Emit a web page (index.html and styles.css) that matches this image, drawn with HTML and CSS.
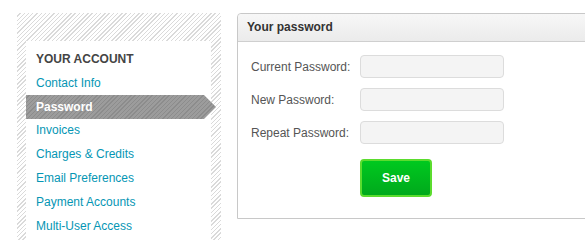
FILE: index.html
```html
<!DOCTYPE html>
<html>
<head>
    <title>Your password</title>
    <link rel="stylesheet" href="styles.css">
</head>
<body>
    <div class="page">
        <div class="sidebar">
            <div class="nav-box">
                <h3>YOUR ACCOUNT</h3>
                <ul class="nav">
                    <li><a href="#">Contact Info</a></li>
                    <li class="active"><a href="#">Password</a></li>
                    <li><a href="#">Invoices</a></li>
                    <li><a href="#">Charges &amp; Credits</a></li>
                    <li><a href="#">Email Preferences</a></li>
                    <li><a href="#">Payment Accounts</a></li>
                    <li><a href="#">Multi-User Access</a></li>
                </ul>
            </div>
        </div>

        <div class="panel">
            <div class="panel-header">Your password</div>
            <form class="panel-body">
                <div class="row">
                    <label>Current Password:</label>
                    <input type="password">
                </div>
                <div class="row">
                    <label>New Password:</label>
                    <input type="password">
                </div>
                <div class="row">
                    <label>Repeat Password:</label>
                    <input type="password">
                </div>
                <div class="row actions">
                    <button type="button">Save</button>
                </div>
            </form>
        </div>
    </div>
</body>
</html>
```

FILE: styles.css
```css
body {
    margin: 0;
    font-family: "Liberation Sans", Arial, sans-serif;
    font-size: 12px;
    background-color: #fff;
    overflow: hidden;
}
.page {
    display: flex;
    align-items: flex-start;
    gap: 16px;
    padding: 13px 0 0 17px;
    height: 240px;
    box-sizing: border-box;
}
.sidebar {
    width: 204px;
    flex-shrink: 0;
    align-self: stretch;
    padding: 28px 10px 0 9px;
    box-sizing: border-box;
    background: repeating-linear-gradient(135deg, #fff 0, #fff 2px, #dadada 2px, #dadada 3px);
}
.nav-box {
    background-color: #fff;
    height: 100%;
    padding-top: 6px;
}
.nav-box h3 {
    margin: 0;
    padding-left: 10px;
    line-height: 24px;
    font-size: 12px;
    color: #444;
}
.nav {
    list-style: none;
    margin: 0;
    padding: 0;
}
.nav li {
    line-height: 24px;
    height: 24px;
}
.nav a {
    display: block;
    padding-left: 10px;
    color: #0596b4;
    text-decoration: none;
}
.nav li.active {
    width: 190px;
    margin-bottom: -1px;
    background: repeating-linear-gradient(135deg, #9c9c9c 0, #9c9c9c 2px, #8c8c8c 2px, #8c8c8c 3px);
    clip-path: polygon(0 0, 178px 0, 100% 50%, 178px 100%, 0 100%);
}
.nav li.active a {
    color: #fff;
    font-weight: bold;
}
.panel {
    flex: 1;
    margin-right: -10px;
    border: 1px solid #c8c8c8;
    border-radius: 4px 0 0 0;
}
.panel-header {
    height: 27px;
    line-height: 27px;
    padding-left: 9px;
    font-weight: bold;
    color: #333;
    background: linear-gradient(#f7f7f7, #ebebeb);
    border-bottom: 1px solid #cfcfcf;
    border-radius: 4px 0 0 0;
}
.panel-body {
    display: flex;
    flex-direction: column;
    gap: 10px;
    padding: 13px 0 21px 13px;
    margin: 0;
}
.row {
    display: flex;
    align-items: center;
}
.row label {
    width: 109px;
    color: #555;
}
.row input {
    width: 144px;
    height: 23px;
    box-sizing: border-box;
    border: 1px solid #dcdcdc;
    border-radius: 4px;
    background-color: #f4f4f4;
    padding: 0;
}
.actions {
    padding-left: 109px;
    margin-top: 5px;
}
button {
    width: 72px;
    height: 38px;
    border: 2px solid #5bdc2e;
    border-radius: 4px;
    background: linear-gradient(#00c91f, #00a91c);
    color: #fff;
    font-family: "Liberation Sans", Arial, sans-serif;
    font-size: 12px;
    font-weight: bold;
    cursor: pointer;
}
```
